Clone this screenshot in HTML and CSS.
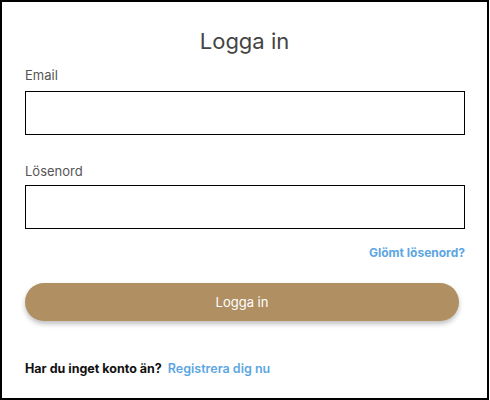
FILE: index.html
```html
<!DOCTYPE html>
<html lang="sv">
<head>
<meta charset="utf-8">
<title>Logga in</title>
<link rel="stylesheet" href="styles.css">
</head>
<body>
<div class="card">
  <h1 class="title">Logga in</h1>
  <label class="label" for="email">Email</label>
  <input class="field" id="email" type="email">
  <label class="label label-pw" for="pw">Lösenord</label>
  <input class="field field-pw" id="pw" type="password">
  <div class="forgot-row"><a class="link forgot" href="#">Glömt lösenord?</a></div>
  <button class="btn" type="button">Logga in</button>
  <p class="signup">Har du inget konto än?<a class="link register" href="#">Registrera dig nu</a></p>
</div>
</body>
</html>
```
FILE: styles.css
```css
html, body {
  margin: 0;
  padding: 0;
  background: #fff;
}
body {
  font-family: Inter, "Noto Sans", "Liberation Sans", sans-serif;
}
.card {
  box-sizing: border-box;
  width: 489px;
  height: 400px;
  border: 2px solid #000;
  padding: 24px 0 0 23px;
  display: flex;
  flex-direction: column;
  align-items: flex-start;
}
.title {
  align-self: stretch;
  margin: 0 0 0 -23px;
  font-size: 22px;
  line-height: 30px;
  font-weight: 400;
  color: #444;
  text-align: center;
}
.label {
  margin-top: 11px;
  font-size: 13px;
  line-height: 16px;
  color: #555;
}
.label-pw {
  margin-top: 28px;
}
.field {
  box-sizing: border-box;
  width: 440px;
  height: 44px;
  margin: 8px 0 0 0;
  border: 1px solid #000;
  border-radius: 0;
  padding: 0 8px;
  outline: none;
}
.field-pw {
  margin-top: 6px;
}
.forgot-row {
  width: 440px;
  display: flex;
  justify-content: flex-end;
  margin-top: 16px;
}
.link {
  color: #5ba6e2;
  text-decoration: none;
}
.forgot {
  font-size: 12px;
  line-height: 16px;
  font-weight: 700;
}
.btn {
  width: 434px;
  height: 38px;
  margin-top: 22px;
  border: none;
  border-radius: 19px;
  background: #b08f63;
  color: #fff;
  font-family: inherit;
  font-size: 13px;
  box-shadow: 0 3px 5px rgba(0, 0, 0, 0.25);
}
.signup {
  margin: 40px 0 0 0;
  font-size: 12.5px;
  line-height: 16px;
  font-weight: 700;
  color: #111;
}
.register {
  margin-left: 6px;
  font-weight: 600;
}
```
